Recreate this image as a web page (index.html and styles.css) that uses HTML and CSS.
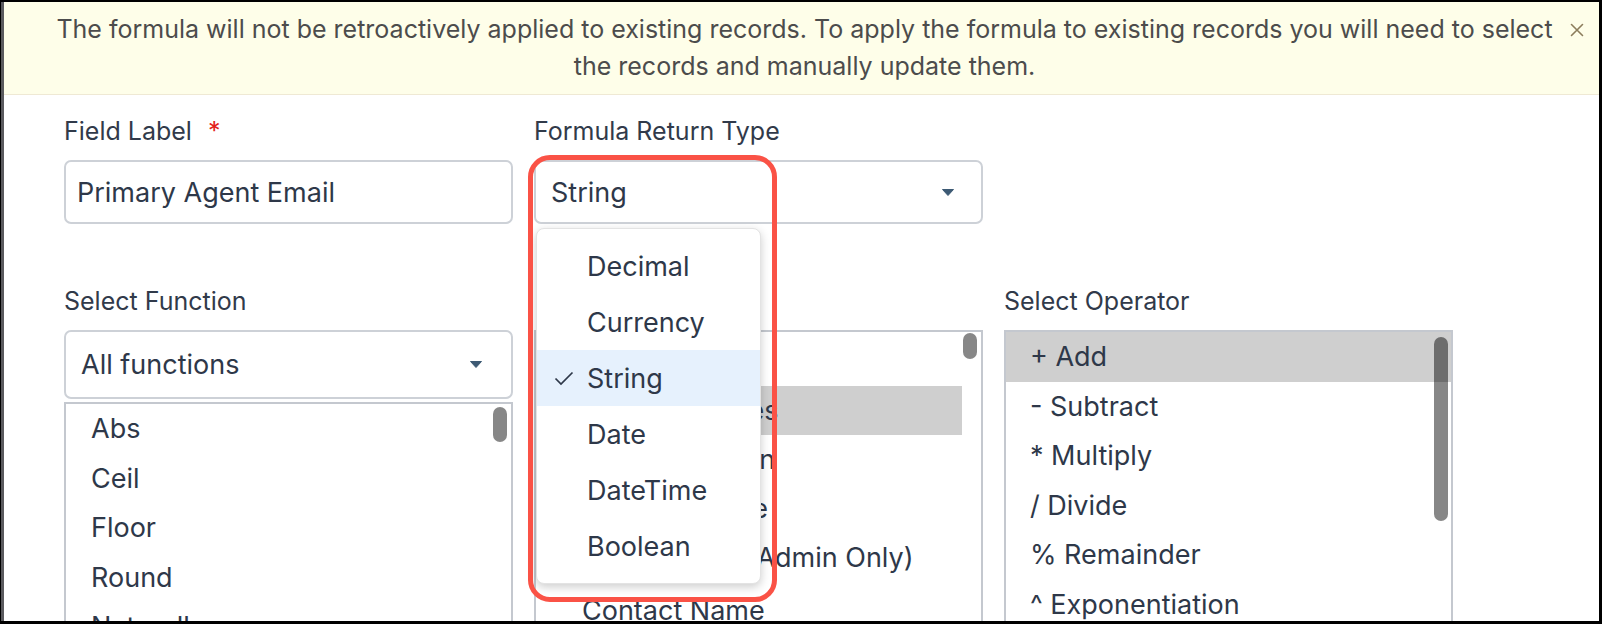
FILE: index.html
```html
<!DOCTYPE html>
<html>
<head>
<meta charset="utf-8">
<title>Formula field</title>
<link rel="stylesheet" href="styles.css">
</head>
<body>
<div class="frame">
  <div class="banner">
    <p class="banner-text">The formula will not be retroactively applied to existing records. To apply the formula to existing records you will need to select<br>the records and manually update them.</p>
    <svg class="banner-close" viewBox="0 0 14 14" width="14" height="14"><path d="M1.5 1.5 L12.5 12.5 M12.5 1.5 L1.5 12.5" stroke="#8c7d5c" stroke-width="1.6" fill="none" stroke-linecap="round"/></svg>
  </div>
  <div class="form">
    <div class="row row-top">
      <div class="field">
        <label class="label">Field Label <span class="req">*</span></label>
        <div class="input">Primary Agent Email</div>
      </div>
      <div class="field">
        <label class="label">Formula Return Type</label>
        <div class="select-wrap">
          <div class="select select-short">String
            <svg class="caret" viewBox="0 0 12 7" width="12" height="7"><path d="M0.5 0.5 H11.5 L6 6.5 Z" fill="#3d5a74" stroke="#3d5a74" stroke-linejoin="round"/></svg>
          </div>
          <div class="menu">
            <div class="menu-item">Decimal</div>
            <div class="menu-item">Currency</div>
            <div class="menu-item active">
              <svg class="check" viewBox="0 0 20 15" width="20" height="15"><path d="M1.5 7.5 L7 13 L18.5 1.5" stroke="#2e3849" stroke-width="1.7" fill="none"/></svg>
              String</div>
            <div class="menu-item">Date</div>
            <div class="menu-item">DateTime</div>
            <div class="menu-item">Boolean</div>
          </div>
          <div class="annot"></div>
        </div>
      </div>
    </div>
    <div class="row row-bottom">
      <div class="field">
        <label class="label">Select Function</label>
        <div class="select select-tall">All functions
          <svg class="caret" viewBox="0 0 12 7" width="12" height="7"><path d="M0.5 0.5 H11.5 L6 6.5 Z" fill="#3d5a74" stroke="#3d5a74" stroke-linejoin="round"/></svg>
        </div>
        <div class="list list-func">
          <div class="item">Abs</div>
          <div class="item">Ceil</div>
          <div class="item">Floor</div>
          <div class="item">Round</div>
          <div class="item">Naturallog</div>
          <div class="item">Base10log</div>
          <div class="thumb thumb-func"></div>
        </div>
      </div>
      <div class="field">
        <label class="label label-hidden">Select Field</label>
        <div class="list list-field">
          <div class="item">Agent Name</div>
          <div class="item sel">Agent Licenses</div>
          <div class="item">Agent Location</div>
          <div class="item">Agent Website</div>
          <div class="item">Commission (Admin Only)</div>
          <div class="item item-gap">Contact Name</div>
          <div class="thumb thumb-field"></div>
        </div>
      </div>
      <div class="field">
        <label class="label">Select Operator</label>
        <div class="list list-op">
          <div class="item sel">+ Add</div>
          <div class="item">- Subtract</div>
          <div class="item">* Multiply</div>
          <div class="item">/ Divide</div>
          <div class="item">% Remainder</div>
          <div class="item">^ Exponentiation</div>
          <div class="thumb thumb-op"></div>
        </div>
      </div>
    </div>
  </div>
</div>
</body>
</html>
```
FILE: styles.css
```css
* { box-sizing: border-box; }
html, body { margin: 0; height: 100%; }
body {
  background: #000;
  font-family: "Inter", "Lato", sans-serif;
  color: #2e3849;
  overflow: hidden;
}
.frame {
  margin: 2px 3px 0 1px;
  height: 619px;
  background: #fff;
  border-left: 3px solid #5a5a5e;
  overflow: hidden;
  position: relative;
}
.banner {
  position: relative;
  height: 93px;
  background: #fefee9;
  border-bottom: 1px solid #efe9d4;
  padding: 9px 30px 0 36px;
}
.banner-text {
  margin: 0;
  font-size: 25px;
  line-height: 37px;
  color: #4c4c4c;
  text-align: center;
  white-space: nowrap;
}
.banner-close {
  position: absolute;
  right: 15px;
  top: 21px;
}
.form {
  padding: 21px 0 0 60px;
}
.row {
  display: grid;
  grid-template-columns: 449px 449px 449px;
  column-gap: 21px;
  align-items: start;
}
.row-top { grid-template-columns: 449px 449px; }
.row-bottom { margin-top: 62px; }
.label {
  display: block;
  font-size: 25px;
  line-height: 30px;
  margin-bottom: 14px;
  color: #313a4a;
}
.label-hidden { padding-left: 5px; }
.req { color: #e3211c; margin-left: 9px; }
.input, .select {
  border: 2px solid #cdd1d7;
  border-radius: 7px;
  font-size: 27px;
  display: flex;
  align-items: center;
  background: #fff;
}
.input { height: 64px; padding: 0 11px; }
.select { justify-content: space-between; }
.select-short { height: 64px; padding: 0 27px 0 15px; }
.select-tall { height: 69px; padding: 0 29px 0 15px; margin-bottom: 3px; }
.select-wrap { position: relative; z-index: 10; }
.menu {
  position: absolute;
  left: 2px;
  top: 68px;
  width: 225px;
  padding: 9px 0;
  background: #fff;
  border: 1px solid #e3e3e3;
  border-radius: 8px;
  box-shadow: 0 3px 10px rgba(0, 0, 0, 0.2);
}
.menu-item {
  position: relative;
  height: 56px;
  display: flex;
  align-items: center;
  padding-left: 50px;
  font-size: 27px;
}
.menu-item.active { background: #e6f1fd; }
.check { position: absolute; left: 17px; top: 21px; }
.annot {
  position: absolute;
  left: -6px;
  top: -5px;
  width: 249px;
  height: 447px;
  border: 5px solid #fa5246;
  border-radius: 22px;
  pointer-events: none;
}
.list {
  position: relative;
  height: 320px;
  border: 2px solid #c4c8cf;
  overflow: hidden;
}
.item {
  height: 49.5px;
  display: flex;
  align-items: center;
  font-size: 27px;
  white-space: nowrap;
  padding-left: 25px;
}
.item.sel { background: #cfcfcf; }
.list-field { padding: 5px 19px 0 0; }
.list-field .item { padding-left: 46px; height: 49px; }
.list-field .item-gap { margin-top: 4px; }
.list-op .item { padding-left: 24px; }
.thumb {
  position: absolute;
  width: 14px;
  border-radius: 7px;
  background: rgba(0, 0, 0, 0.47);
}
.thumb-func { right: 4px; top: 3px; height: 35px; }
.thumb-field { right: 4px; top: 1px; height: 26px; }
.thumb-op { right: 3px; top: 5px; height: 184px; }
```
